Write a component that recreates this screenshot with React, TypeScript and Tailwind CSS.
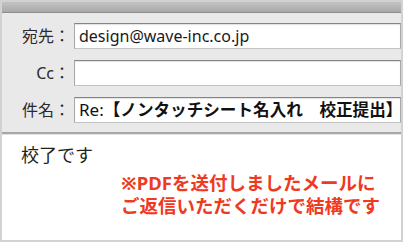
const font = { fontFamily: '"Noto Sans", "Noto Sans CJK JP", sans-serif' };

function Field({ label, children }: { label: string; children?: React.ReactNode }) {
  return (
    <div className="flex items-center">
      <div className="w-[68px] shrink-0 text-right text-[16px] leading-none text-[#2a2a2a]">{label}</div>
      <div className="ml-[4px] flex h-[26px] flex-1 items-center overflow-hidden whitespace-nowrap border border-[#a9a9a9] border-t-[#858585] border-b-[#c4c4c4] bg-white pl-[4px] shadow-[inset_0_1px_1px_rgba(0,0,0,0.12)]">
        {children}
      </div>
    </div>
  );
}

export default function App() {
  return (
    <div style={font} className="flex h-[242px] w-[403px] flex-col overflow-hidden border-2 border-[#d2d2d2] bg-white">
      <div className="h-[11px] shrink-0 border-b border-[#8f8f8f] bg-gradient-to-b from-[#c3c3c3] to-[#a9a9a9]" />

      <div className="flex shrink-0 flex-col gap-[11px] bg-[#e9e9e9] pb-[9px] pt-[10px]">
        <Field label="宛先：">
          <span className="text-[16px] text-[#1a1a1a]">design@wave-inc.co.jp</span>
        </Field>
        <Field label="Cc：" />
        <Field label="件名：">
          <span className="text-[17px] text-[#111]">Re: </span>
          <span className="text-[16.6px] font-bold text-[#111]">【ノンタッチシート名入れ　校正提出】</span>
        </Field>
      </div>

      <div className="h-[3px] shrink-0 border-t-2 border-[#a8a8a8] bg-[#e2e2e2]" />

      <div className="flex-1 pl-[19px] pt-[8px]">
        <p className="text-[18px] leading-[24px] text-[#222]">校了です</p>
        <div className="ml-[100px] mt-[4px] text-[18.5px] font-bold leading-[23px] text-[#ef3a1f]">
          <p>※PDFを送付しましたメールに</p>
          <p>ご返信いただくだけで結構です</p>
        </div>
      </div>
    </div>
  );
}
